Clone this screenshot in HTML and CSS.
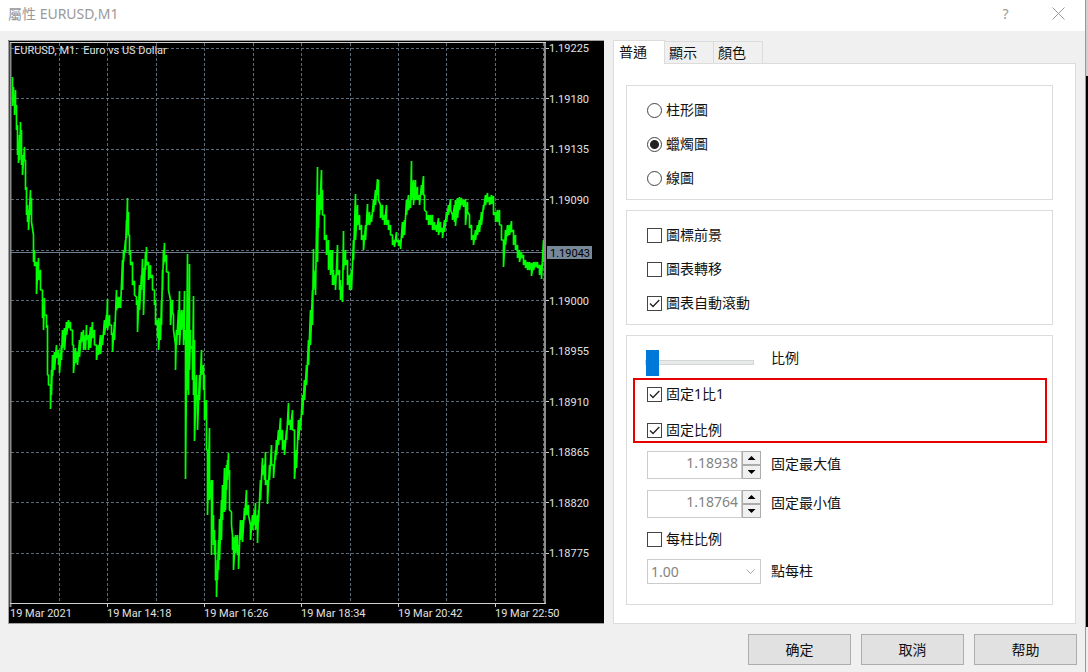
FILE: index.html
```
<!DOCTYPE html>
<html lang="zh-Hant">
<head>
<meta charset="utf-8">
<title>屬性 EURUSD,M1</title>
<link rel="stylesheet" href="styles.css">
</head>
<body>
<div class="desktop">
<main class="dialog">
  <header class="titlebar">
    <h1 class="title">屬性 EURUSD,M1</h1>
    <button class="title-button" type="button" aria-label="Help">?</button>
    <button class="title-button" type="button" aria-label="Close"><svg width="13" height="13" viewBox="0 0 13 13"><path d="M.5.5l12 12M12.5.5l-12 12"/></svg></button>
  </header>

  <div class="content">
    <svg class="chart" viewBox="8 40 596 584" role="img" aria-label="EURUSD M1">
      <rect class="chart-bg" x="8" y="40" width="596" height="584"/>
      <path class="bevel" d="M8.5 624V40.5H604M8 623.5H604"/>
      <path class="grid" d="M59.5 43V603M107.5 43V603M156.5 43V603M204.5 43V603M253.5 43V603M301.5 43V603M350.5 43V603M398.5 43V603M446.5 43V603M495.5 43V603M543.5 43V603"/>
      <path class="grid" d="M11 48.5H545M11 98.5H545M11 149.5H545M11 199.5H545M11 250.5H545M11 300.5H545M11 351.5H545M11 401.5H545M11 452.5H545M11 502.5H545M11 553.5H545"/>
      <path class="price-line" d="M11 252.5H545"/>
      <polyline class="series" id="series"/>
      <path class="axis-side" d="M10.5 42V607M545 42V604"/>
      <path class="axis" d="M10 42.5H546M10 603.5H546M107.5 603V607M204.5 603V607M301.5 603V607M398.5 603V607M495.5 603V607M546 48.5H549M546 98.5H549M546 149.5H549M546 199.5H549M546 300.5H549M546 351.5H549M546 401.5H549M546 452.5H549M546 502.5H549M546 553.5H549"/>
      <g class="chart-text">
        <text x="14" y="54" xml:space="preserve">EURUSD, M1:  Euro vs US Dollar</text>
        <text x="549" y="52">1.19225</text>
        <text x="549" y="103">1.19180</text>
        <text x="549" y="153">1.19135</text>
        <text x="549" y="204">1.19090</text>
        <text x="549" y="305">1.19000</text>
        <text x="549" y="355">1.18955</text>
        <text x="549" y="406">1.18910</text>
        <text x="549" y="456">1.18865</text>
        <text x="549" y="507">1.18820</text>
        <text x="549" y="557">1.18775</text>
        <text x="10" y="617">19 Mar 2021</text>
        <text x="107" y="617">19 Mar 14:18</text>
        <text x="204" y="617">19 Mar 16:26</text>
        <text x="301" y="617">19 Mar 18:34</text>
        <text x="398" y="617">19 Mar 20:42</text>
        <text x="495" y="617">19 Mar 22:50</text>
      </g>
      <rect class="price-tag" x="547" y="246" width="45" height="13"/>
      <text class="price-text" x="550" y="257">1.19043</text>
    </svg>

    <section class="settings">
      <div class="tabs" role="tablist">
        <button class="tab active" type="button" role="tab" aria-selected="true">普通</button>
        <button class="tab" type="button" role="tab">顯示</button>
        <button class="tab" type="button" role="tab">顏色</button>
      </div>
      <div class="panel">
        <div class="group options" role="radiogroup">
          <label class="option"><input class="radio" type="radio" name="style">柱形圖</label>
          <label class="option"><input class="radio" type="radio" name="style" checked>蠟燭圖</label>
          <label class="option"><input class="radio" type="radio" name="style">線圖</label>
        </div>
        <div class="group options">
          <label class="option"><input class="check" type="checkbox">圖標前景</label>
          <label class="option"><input class="check" type="checkbox">圖表轉移</label>
          <label class="option"><input class="check" type="checkbox" checked>圖表自動滾動</label>
        </div>
        <div class="group scale">
          <div class="field slider-field">
            <input class="slider" id="scale" type="range" min="0" max="5" value="0">
            <label for="scale">比例</label>
          </div>
          <div class="highlight">
            <label class="option"><input class="check" type="checkbox" checked>固定1比1</label>
            <label class="option"><input class="check" type="checkbox" checked>固定比例</label>
          </div>
          <div class="field spin-field">
            <div class="spin">
              <input class="spin-input" id="max" type="text" value="1.18938" disabled>
              <div class="spin-buttons">
                <button class="step" type="button" aria-label="Increase maximum"><span class="arrow up"></span></button>
                <button class="step" type="button" aria-label="Decrease maximum"><span class="arrow down"></span></button>
              </div>
            </div>
            <label for="max">固定最大值</label>
          </div>
          <div class="field spin-field">
            <div class="spin">
              <input class="spin-input" id="min" type="text" value="1.18764" disabled>
              <div class="spin-buttons">
                <button class="step" type="button" aria-label="Increase minimum"><span class="arrow up"></span></button>
                <button class="step" type="button" aria-label="Decrease minimum"><span class="arrow down"></span></button>
              </div>
            </div>
            <label for="min">固定最小值</label>
          </div>
          <label class="option"><input class="check" type="checkbox">每柱比例</label>
          <div class="field select-field">
            <div class="select-wrap">
              <select class="select" id="points" disabled><option>1.00</option></select>
              <svg class="chevron" width="9" height="6" viewBox="0 0 9 6"><path d="M.5.5l4 4 4-4"/></svg>
            </div>
            <label for="points">點每柱</label>
          </div>
        </div>
      </div>
    </section>
  </div>

  <footer class="actions">
    <button class="action" type="button">确定</button>
    <button class="action" type="button">取消</button>
    <button class="action" type="button">帮助</button>
  </footer>
</main>
<div class="backdrop"><div class="backdrop-top"></div><div class="backdrop-chart"></div><div class="backdrop-bottom"></div></div>
</div>
<script src="chart.js"></script>
</body>
</html>
```
FILE: styles.css
```
* { box-sizing: border-box; }
body {
  margin: 0;
  background: #f0f0f0;
  color: #111;
  font: 14px/20px "Noto Sans", "Noto Sans CJK TC", sans-serif;
}
button, input, select { font: inherit; color: inherit; margin: 0; }
.desktop { display: flex; min-height: 100vh; }
.dialog { flex: 1; min-width: 0; display: flex; flex-direction: column; }

.titlebar { display: flex; align-items: center; height: 31px; padding: 0 13px 4px 8px; background: #fff; color: #999; }
.title { flex: 1; margin: 0; font-size: 14px; font-weight: 400; line-height: 20px; }
.title-button { display: flex; align-items: center; justify-content: center; width: 27px; height: 27px; margin-left: 26px; padding: 0; border: 0; background: none; color: #999; }
.title-button svg { fill: none; stroke: #999; }

.content { display: grid; grid-template-columns: 596fr 463fr; gap: 9px; padding: 9px 9px 0 8px; align-items: start; }
.chart { display: block; width: 100%; height: auto; }
.chart-bg { fill: #000; }
.bevel { fill: none; stroke: #a0a0a0; }
.grid { fill: none; stroke: #5d6b79; stroke-dasharray: 3 2; }
.price-line { stroke: #6d7e8e; }
.series { fill: none; stroke: #0f0; stroke-width: 1.7px; stroke-linejoin: bevel; }
.axis { fill: none; stroke: #d0d0d0; }
.axis-side { fill: none; stroke: #8c8c8c; stroke-width: 2px; }
.chart-text, .price-text { font-family: Roboto, sans-serif; font-size: 11px; fill: #e0e0e0; }
.price-tag { fill: #778899; }
.price-text { fill: #000; }

.settings { display: flex; flex-direction: column; }
.tabs { display: flex; align-items: flex-end; height: 23px; }
.tab { width: 49px; height: 22px; padding: 0 4px; border: 1px solid #dcdcdc; border-left-width: 0; border-bottom: 0; background: #f0f0f0; line-height: 20px; text-align: left; }
.tab.active { width: 52px; height: 24px; margin-bottom: -1px; padding: 0 5px 2px; border-left-width: 1px; background: #fff; z-index: 1; }
.panel { display: flex; flex-direction: column; gap: 10px; padding: 21px 22px 18px 12px; border: 1px solid #dcdcdc; background: #fff; }
.group { border: 1px solid #dcdcdc; padding: 0 20px; }
.options { display: flex; flex-direction: column; gap: 14px; padding-top: 14px; padding-bottom: 11px; }
.option { display: flex; align-items: center; gap: 4px; height: 20px; width: fit-content; }
.radio, .check { appearance: none; flex: none; width: 15px; height: 15px; border: 1px solid #444; background: #fff; }
.radio { border-radius: 50%; }
.radio:checked { background: radial-gradient(circle, #222 4px, #fff 5px); }
.check:checked { background: #fff url("data:image/svg+xml,%3Csvg xmlns='http://www.w3.org/2000/svg' viewBox='0 0 13 13'%3E%3Cpath d='M2 6.5l3 3L11.3 3' fill='none' stroke='%23222' stroke-width='1.3'/%3E%3C/svg%3E"); }

.scale { padding-bottom: 20px; }
.field { display: grid; grid-template-columns: 114px 1fr; column-gap: 10px; align-items: center; }
.field label { padding-bottom: 2px; }
.slider-field { padding-top: 10px; height: 42px; }
.slider-field label { padding-bottom: 8px; }
.slider { appearance: none; width: 109px; height: 26px; margin-left: -2px; background: none; }
.slider::-webkit-slider-runnable-track { height: 5px; border: 1px solid #d6d6d6; background: #e7eaea; }
.slider::-webkit-slider-thumb { appearance: none; width: 13px; height: 26px; margin-top: -11px; background: #0078d7; }
.highlight { display: flex; flex-direction: column; gap: 16px; height: 65px; margin: 0 -15px 0 -14px; padding: 4px 12px 0; border: 2px solid #e60000; }
.spin-field { margin-top: 8px; height: 28px; }
.spin-field + .spin-field { margin-top: 11px; margin-bottom: 11px; }
.spin { display: flex; height: 28px; }
.spin-input { flex: 1; min-width: 0; padding: 0 3px 4px; border: 1px solid #ccc; background: #fff; color: #838383; text-align: right; }
.spin-buttons { display: flex; flex-direction: column; width: 19px; }
.step { display: flex; flex: 1; align-items: center; justify-content: center; padding: 0; border: 1px solid #acacac; background: #f0f0f0; }
.arrow { width: 8px; height: 4px; background: #000; }
.up { clip-path: polygon(50% 0, 100% 100%, 0 100%); }
.down { clip-path: polygon(0 0, 100% 0, 50% 100%); }
.select-field { margin-top: 10px; }
.select-wrap { display: grid; align-items: center; }
.select { grid-area: 1 / 1; appearance: none; width: 100%; height: 25px; padding: 0 3px; border: 1px solid #ccc; border-radius: 0; background: #fff; color: #838383; opacity: 1; }
.chevron { grid-area: 1 / 1; justify-self: end; margin-right: 6px; fill: none; stroke: #aaa; }

.actions { display: flex; justify-content: flex-end; gap: 10px; padding: 10px 8px 8px; }
.action { width: 103px; height: 31px; padding: 0; border: 1px solid #adadad; background: #e1e1e1; }

.backdrop { display: flex; flex-direction: column; width: 3px; border-left: 1px solid #999; background: #d0d0d0; }
.backdrop-top { height: 76px; }
.backdrop-chart { height: 551px; background: #000; }
.backdrop-bottom { flex: 1; background: #eee; }
```
FILE: chart.js
```
// Each entry: x, high, low
const bars = `12 77 106,13 87 102,14 95 115,15 90 108,16 105 130,17 125 155,18 146 163,19 135 160,20 122 145,21 130 165,22 155 175,24 147 160,25 160 190,26 187 215,27 205 222,28 210 230,30 190 215,31 198 222,33 235 262,34 250 266,36 262 294,38 258 280,40 270 290,42 290 318,43 310 330,44 298 315,46 315 328,47 325 375,48 375 385,50 385 409,51 370 395,52 355 376,54 352 370,56 345 358,58 350 365,59 355 373,61 345 360,62 330 348,64 328 350,66 322 335,68 320 328,70 322 330,72 330 345,73 345 373,75 348 363,77 352 365,79 340 357,81 332 342,83 330 350,85 335 350,86 325 340,88 335 350,90 327 348,92 322 338,94 330 345,96 345 360,98 345 355,100 335 354,102 335 345,104 320 335,106 315 328,107 299 330,109 315 325,111 325 335,112 333 352,114 322 340,116 290 310,118 297 308,120 297 308,122 260 290,123 250 262,125 240 252,126 220 238,127 198 225,128 212 235,129 235 255,130 250 265,132 262 285,134 281 295,136 297 305,137 300 332,139 285 310,141 275 290,142 259 280,143 268 315,145 252 270,146 247 265,148 262 280,150 265 278,152 275 290,154 290 305,155 300 325,157 320 338,158 318 350,160 318 340,161 300 325,162 270 290,163 250 265,164 243 262,166 255 272,168 272 290,170 300 325,172 300 312,173 315 330,175 345 370,176 330 345,178 310 335,179 291 345,181 310 330,183 310 345,184 291 340,185 330 479,187 254 390,188 350 395,189 264 370,190 330 345,192 350 380,193 296 395,194 340 441,196 375 400,197 395 430,199 375 400,201 350 375,203 365 390,204 375 420,206 400 450,207 450 515,209 428 500,211 480 555,212 480 520,213 515 545,214 530 555,215 540 580,216 580 597,217 560 580,218 540 570,219 519 560,221 500 540,222 485 520,223 485 500,224 468 512,225 480 510,226 465 490,227 460 480,228 453 475,229 470 510,231 512 525,232 535 550,233 537 570,235 535 553,237 535 555,238 545 569,240 520 540,242 520 542,244 508 520,246 490 515,248 505 515,250 525 540,252 515 530,254 510 525,255 503 530,257 515 543,258 510 522,260 480 500,262 458 475,264 465 480,265 452 485,267 480 504,269 465 480,271 445 465,273 465 478,275 450 460,276 440 455,278 430 445,280 418 440,282 430 450,284 440 455,286 430 440,288 403 425,290 420 430,292 410 430,294 430 479,296 450 468,298 420 440,300 418 430,302 395 415,304 380 400,306 365 385,308 340 365,310 310 345,312 290 325,313 249 290,315 270 295,317 167 262,318 195 228,319 195 215,321 170 210,322 190 215,324 215 240,326 235 255,328 240 270,330 250 275,332 250 285,333 270 285,335 275 290,337 245 275,339 270 290,340 280 300,342 285 302,343 231 270,345 250 265,347 260 285,349 275 290,351 270 290,353 240 260,355 194 240,357 205 225,359 215 230,361 225 240,363 235 250,365 225 240,367 204 225,369 212 225,371 215 222,373 200 212,375 190 205,377 179 195,378 180 200,380 205 218,382 205 220,384 215 225,386 205 225,388 220 230,390 225 235,392 235 245,394 240 247,396 232 242,398 240 246,400 240 249,402 222 238,404 220 235,406 200 215,408 195 210,410 200 208,411 161 200,413 180 205,415 180 200,417 187 200,419 195 205,421 185 195,423 176 195,424 195 210,426 212 220,428 215 225,430 215 225,432 215 230,434 222 230,436 225 232,438 218 235,440 222 232,442 228 238,444 220 232,446 212 222,448 205 215,450 199 210,452 215 220,454 205 222,455 200 226,457 198 218,459 197 210,461 198 205,463 200 207,465 199 225,467 202 212,469 215 228,471 225 240,473 235 245,475 230 240,477 225 235,479 220 232,481 212 225,483 205 210,485 195 205,487 193 202,489 197 205,491 195 204,493 196 215,495 212 222,497 210 222,499 210 225,501 225 240,503 240 267,505 230 245,507 225 236,509 225 235,511 221 232,513 230 245,515 235 250,517 245 258,519 250 262,521 252 258,523 255 265,525 260 268,527 262 270,529 262 270,531 263 276,533 262 270,535 262 267,537 262 268,539 265 275,541 265 279,543 240 262`;

const points = bars.split(",").map((bar) => {
  const [x, high, low] = bar.trim().split(" ").map(Number);
  return `${x + 0.5},${high} ${x + 0.5},${low}`;
});
document.getElementById("series").setAttribute("points", points.join(" "));
```
